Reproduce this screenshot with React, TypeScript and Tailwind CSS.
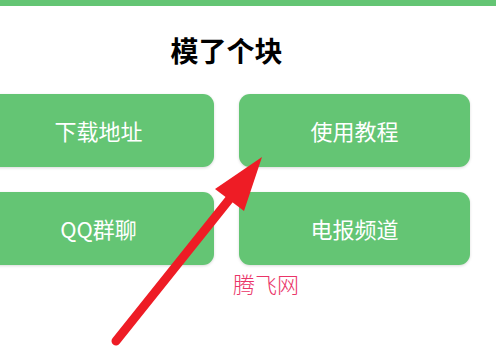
const links = ["下载地址", "使用教程", "QQ群聊", "电报频道"];

function Arrow() {
  return (
    <svg className="pointer-events-none absolute left-0 top-0" width="496" height="362" viewBox="0 0 496 362">
      <line x1="116" y1="341" x2="232" y2="196" stroke="#ee1c25" strokeWidth="9" strokeLinecap="round" />
      <polygon points="262,157 215,189 244,211" fill="#ee1c25" />
    </svg>
  );
}

export default function App() {
  return (
    <div
      className="relative h-[362px] w-[496px] overflow-hidden bg-white"
      style={{ fontFamily: '"Noto Sans CJK SC", "Noto Sans", sans-serif' }}
    >
      <div className="h-[6px] bg-[#64c574]" />
      <h1 className="mt-[26px] ml-[-17px] w-[487px] text-center text-[28px] font-bold leading-[36px] text-black">
        模了个块
      </h1>
      <div className="mt-[26px] ml-[-17px] grid w-[487px] grid-cols-2 gap-x-[25px] gap-y-[25px]">
        {links.map((label) => (
          <div
            key={label}
            className="flex h-[73px] items-center justify-center rounded-[11px] bg-[#64c574] text-[22px] text-white shadow-[0_1px_3px_rgba(0,0,0,0.15)]"
          >
            {label}
          </div>
        ))}
      </div>
      <p className="mt-[4px] ml-[233px] text-[22px] font-light leading-[28px] text-[#ea3468]">腾飞网</p>
      <Arrow />
    </div>
  );
}
